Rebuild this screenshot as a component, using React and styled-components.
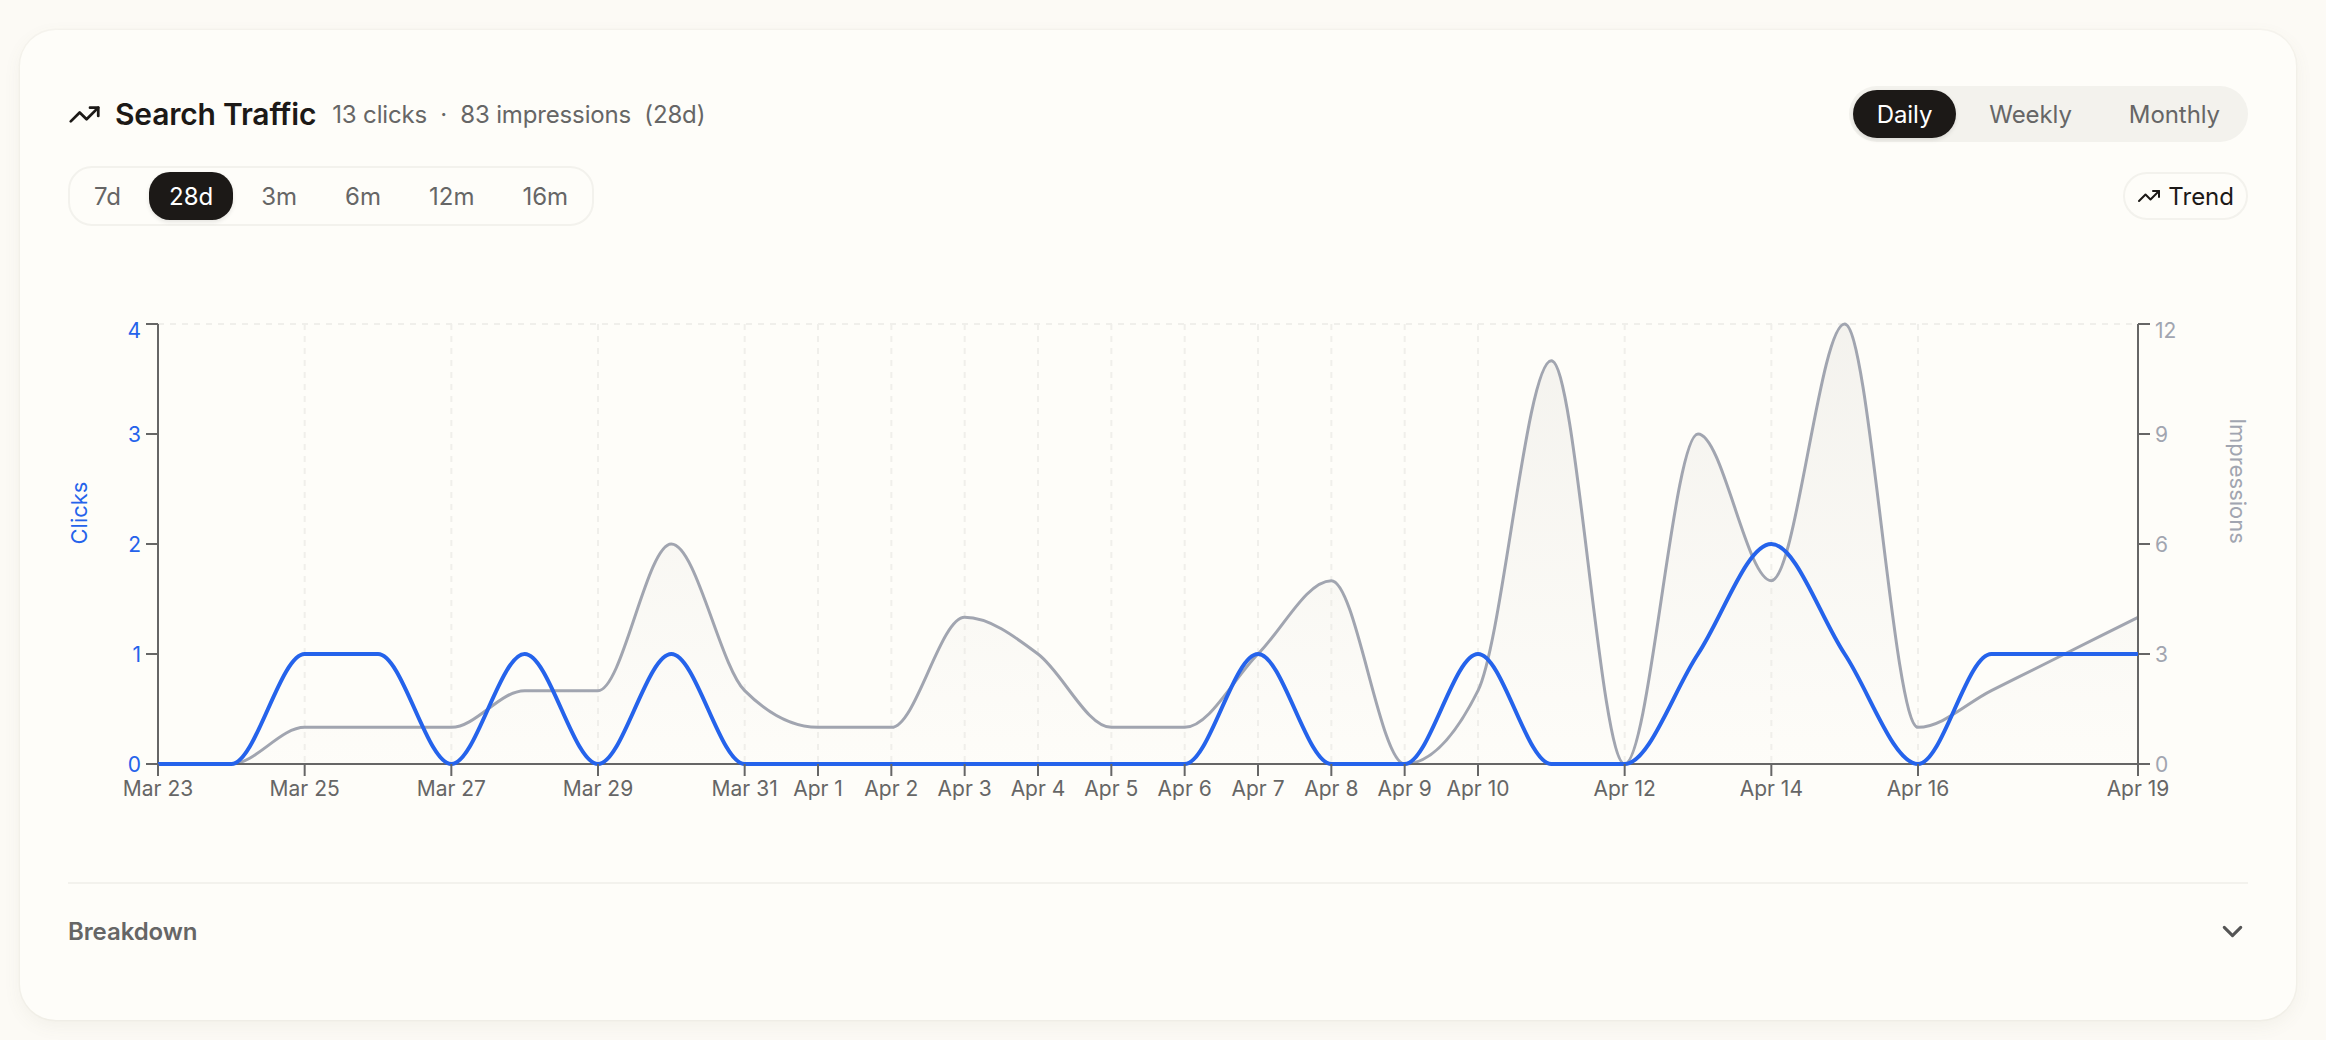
import React from 'react';
import styled, { createGlobalStyle } from 'styled-components';
import { TrendingUp, ChevronDown } from 'lucide-react';

const GlobalStyle = createGlobalStyle`
  html, body { margin: 0; padding: 0; background: #fcfaf5; height: 100%; overflow: hidden; }
  body { font-family: Inter, "Liberation Sans", sans-serif; -webkit-font-smoothing: antialiased; }
  * { box-sizing: border-box; }
`;

const Page = styled.div`
  padding: 30px 30px 20px 20px;
  height: 1040px;
`;
const Card = styled.section`
  height: 990px;
  padding: 56px 48px 0;
  background: #fefdf9;
  border-radius: 36px;
  box-shadow: 0 0 0 1.5px rgba(120, 110, 90, 0.035), 0 6px 18px rgba(120, 110, 90, 0.07);
`;
const HeaderRow = styled.header`
  display: flex;
  align-items: center;
  justify-content: space-between;
  height: 56px;
`;
const TitleGroup = styled.div`
  display: flex;
  align-items: center;
`;
const TitleIcon = styled(TrendingUp)`
  width: 33px;
  height: 33px;
  color: #1c1917;
  stroke-width: 2;
  margin-right: 14px;
`;
const Title = styled.h2`
  margin: 0 16px 0 0;
  font-size: 30px;
  font-weight: 600;
  color: #1c1917;
  letter-spacing: -0.2px;
`;
const Stat = styled.span`
  font-size: 24px;
  color: #666;
  white-space: pre;
  letter-spacing: -0.15px;
`;
const ViewToggle = styled.div`
  display: flex;
  gap: 9px;
  padding: 4px;
  height: 56px;
  border-radius: 28px;
  background: #f3f2ed;
`;
const ToggleButton = styled.button`
  height: 48px;
  padding: 0 24px;
  border: 0;
  border-radius: 24px;
  font: 400 24px Inter, sans-serif;
  letter-spacing: -0.08px;
  color: ${p => (p.$active ? '#fff' : '#666')};
  background: ${p => (p.$active ? '#1c1917' : 'transparent')};
  box-shadow: ${p => (p.$active ? '0 2px 4px rgba(0,0,0,.1)' : 'none')};
`;
const ControlRow = styled.div`
  display: flex;
  align-items: center;
  justify-content: space-between;
  margin-top: 24px;
`;
const RangeGroup = styled.div`
  display: flex;
  gap: 8px;
  padding: 4px;
  height: 60px;
  border: 2px solid #f3f2ed;
  border-radius: 24px;
`;
const RangeButton = styled.button`
  height: 48px;
  padding: 0 20px;
  border: 0;
  border-radius: 21px;
  font: 400 24px Inter, sans-serif;
  color: ${p => (p.$active ? '#fff' : '#666')};
  background: ${p => (p.$active ? '#1c1917' : 'transparent')};
  box-shadow: ${p => (p.$active ? '0 2px 4px rgba(0,0,0,.1)' : 'none')};
`;
const TrendButton = styled.button`
  display: flex;
  align-items: center;
  gap: 7px;
  height: 48px;
  padding: 0 12px;
  border: 2px solid #f3f2ed;
  border-radius: 24px;
  background: transparent;
  font: 400 24px Inter, sans-serif;
  color: #1c1917;
`;
const TrendIcon = styled(TrendingUp)`
  width: 24px;
  height: 24px;
  stroke-width: 2;
`;
const ChartSvg = styled.svg`
  display: block;
  margin-top: 74px;
  width: 2180px;
  height: 530px;
  overflow: visible;
`;
const TickLabel = styled.text`
  font-family: Inter, sans-serif;
  font-size: 21px;
  fill: ${p => p.$color};
  text-anchor: ${p => p.$anchor};
`;
const AxisTitle = styled.text`
  font-family: Inter, sans-serif;
  font-size: 22px;
  fill: ${p => p.$color};
  text-anchor: middle;
`;
const Breakdown = styled.div`
  display: flex;
  align-items: center;
  justify-content: space-between;
  height: 97px;
  margin-top: 52px;
  border-top: 2px solid #f3f2ed;
`;
const BreakdownLabel = styled.span`
  font-size: 24px;
  font-weight: 600;
  letter-spacing: -0.1px;
  color: #666;
`;
const Chevron = styled(ChevronDown)`
  width: 33px;
  height: 33px;
  margin-right: -1px;
  color: #555;
  stroke-width: 2.2;
`;

const impressions = [0,0,1,1,1,2,2,6,2,1,1,4,3,1,1,3,5,0,2,11,0,9,5,12,1,2,3,4];
const clicks = [0,0,1,1,0,1,0,1,0,0,0,0,0,0,0,1,0,0,1,0,0,1,2,1,0,1,1,1];

const X0 = 158, X1 = 2138, Y0 = 764, Y1 = 324;
const xAt = i => X0 + ((X1 - X0) * i) / 27;
const yClicks = v => Y0 - ((Y0 - Y1) * v) / 4;
const yImpr = v => Y0 - ((Y0 - Y1) * v) / 12;

// d3 curveMonotoneX
function monotonePath(pts) {
  const n = pts.length;
  const sign = v => (v < 0 ? -1 : 1);
  const dx = [], dy = [], sl = [];
  for (let i = 0; i < n - 1; i++) {
    dx[i] = pts[i + 1][0] - pts[i][0];
    dy[i] = pts[i + 1][1] - pts[i][1];
    sl[i] = dy[i] / dx[i];
  }
  const t = [];
  for (let i = 1; i < n - 1; i++) {
    const p = (sl[i - 1] * dx[i] + sl[i] * dx[i - 1]) / (dx[i - 1] + dx[i]);
    t[i] = (sign(sl[i - 1]) + sign(sl[i])) * Math.min(Math.abs(sl[i - 1]), Math.abs(sl[i]), 0.5 * Math.abs(p)) || 0;
  }
  t[0] = (3 * sl[0] - t[1]) / 2;
  t[n - 1] = (3 * sl[n - 2] - t[n - 2]) / 2;
  let d = `M${pts[0][0]},${pts[0][1]}`;
  for (let i = 0; i < n - 1; i++) {
    const h = dx[i] / 3;
    d += `C${pts[i][0] + h},${pts[i][1] + h * t[i]} ${pts[i + 1][0] - h},${pts[i + 1][1] - h * t[i + 1]} ${pts[i + 1][0]},${pts[i + 1][1]}`;
  }
  return d;
}

const imprPath = monotonePath(impressions.map((v, i) => [xAt(i), yImpr(v)]));
const clickPath = monotonePath(clicks.map((v, i) => [xAt(i), yClicks(v)]));

const dateTicks = [
  [0, 'Mar 23'], [2, 'Mar 25'], [4, 'Mar 27'], [6, 'Mar 29'], [8, 'Mar 31'], [9, 'Apr 1'], [10, 'Apr 2'],
  [11, 'Apr 3'], [12, 'Apr 4'], [13, 'Apr 5'], [14, 'Apr 6'], [15, 'Apr 7'], [16, 'Apr 8'], [17, 'Apr 9'],
  [18, 'Apr 10'], [20, 'Apr 12'], [22, 'Apr 14'], [24, 'Apr 16'], [27, 'Apr 19'],
];
const AXIS = '#666666';
const GRID = '#f0efeb';
const BLUE = '#2563eb';
const GRAY = '#a1a5b0';

function TrafficChart() {
  return (
    <ChartSvg viewBox="68 300 2180 530">
      <defs>
        <linearGradient id="imprFill" x1="0" y1="0" x2="0" y2="1">
          <stop offset="0%" stopColor="#e7e5e0" stopOpacity="0.45" />
          <stop offset="100%" stopColor="#e7e5e0" stopOpacity="0.02" />
        </linearGradient>
      </defs>
      <line x1={X0} x2={X1} y1={Y1} y2={Y1} stroke={GRID} strokeWidth="2" strokeDasharray="6 6" />
      {dateTicks.slice(1, -1).map(([i]) => (
        <line key={i} x1={xAt(i)} x2={xAt(i)} y1={Y1} y2={Y0} stroke={GRID} strokeWidth="2" strokeDasharray="6 6" />
      ))}
      <path d={`${imprPath}L${X1},${Y0}L${X0},${Y0}Z`} fill="url(#imprFill)" />
      <path d={imprPath} fill="none" stroke={GRAY} strokeWidth="3" />

      <line x1={X0} x2={X0} y1={Y1} y2={Y0} stroke={AXIS} strokeWidth="2" />
      <line x1={X1} x2={X1} y1={Y1} y2={Y0} stroke={AXIS} strokeWidth="2" />
      <line x1={X0} x2={X1} y1={Y0} y2={Y0} stroke={AXIS} strokeWidth="2" />
      <path d={clickPath} fill="none" stroke={BLUE} strokeWidth="4" />

      {[0, 1, 2, 3, 4].map(v => (
        <g key={v}>
          <line x1={X0 - 12} x2={X0} y1={yClicks(v)} y2={yClicks(v)} stroke={AXIS} strokeWidth="2" />
          <TickLabel x={X0 - 17} y={yClicks(v) + (v === 4 ? 6 : 0)} dy=".36em" $color={BLUE} $anchor="end">{v}</TickLabel>
        </g>
      ))}
      {[0, 3, 6, 9, 12].map(v => (
        <g key={v}>
          <line x1={X1} x2={X1 + 12} y1={yImpr(v)} y2={yImpr(v)} stroke={AXIS} strokeWidth="2" />
          <TickLabel x={X1 + 17} y={yImpr(v) + (v === 12 ? 6 : 0)} dy=".36em" $color={GRAY} $anchor="start">{v}</TickLabel>
        </g>
      ))}
      {dateTicks.map(([i, label]) => (
        <g key={i}>
          <line x1={xAt(i)} x2={xAt(i)} y1={Y0} y2={Y0 + 12} stroke={AXIS} strokeWidth="2" />
          <TickLabel x={xAt(i)} y={788} dy=".36em" $color={AXIS} $anchor="middle">{label}</TickLabel>
        </g>
      ))}
      <AxisTitle x={79} y={513} dy=".36em" transform="rotate(-90 79 513)" $color={BLUE}>Clicks</AxisTitle>
      <AxisTitle x={2238} y={481} dy=".36em" transform="rotate(90 2238 481)" $color={GRAY}>Impressions</AxisTitle>
    </ChartSvg>
  );
}

export default function App() {
  return (
    <Page>
      <GlobalStyle />
      <Card>
        <HeaderRow>
          <TitleGroup>
            <TitleIcon />
            <Title>Search Traffic</Title>
            <Stat>13 clicks  ·  83 impressions  (28d)</Stat>
          </TitleGroup>
          <ViewToggle>
            <ToggleButton $active>Daily</ToggleButton>
            <ToggleButton>Weekly</ToggleButton>
            <ToggleButton>Monthly</ToggleButton>
          </ViewToggle>
        </HeaderRow>
        <ControlRow>
          <RangeGroup>
            {['7d', '28d', '3m', '6m', '12m', '16m'].map(r => (
              <RangeButton key={r} $active={r === '28d'}>{r}</RangeButton>
            ))}
          </RangeGroup>
          <TrendButton><TrendIcon />Trend</TrendButton>
        </ControlRow>
        <TrafficChart />
        <Breakdown>
          <BreakdownLabel>Breakdown</BreakdownLabel>
          <Chevron />
        </Breakdown>
      </Card>
    </Page>
  );
}
